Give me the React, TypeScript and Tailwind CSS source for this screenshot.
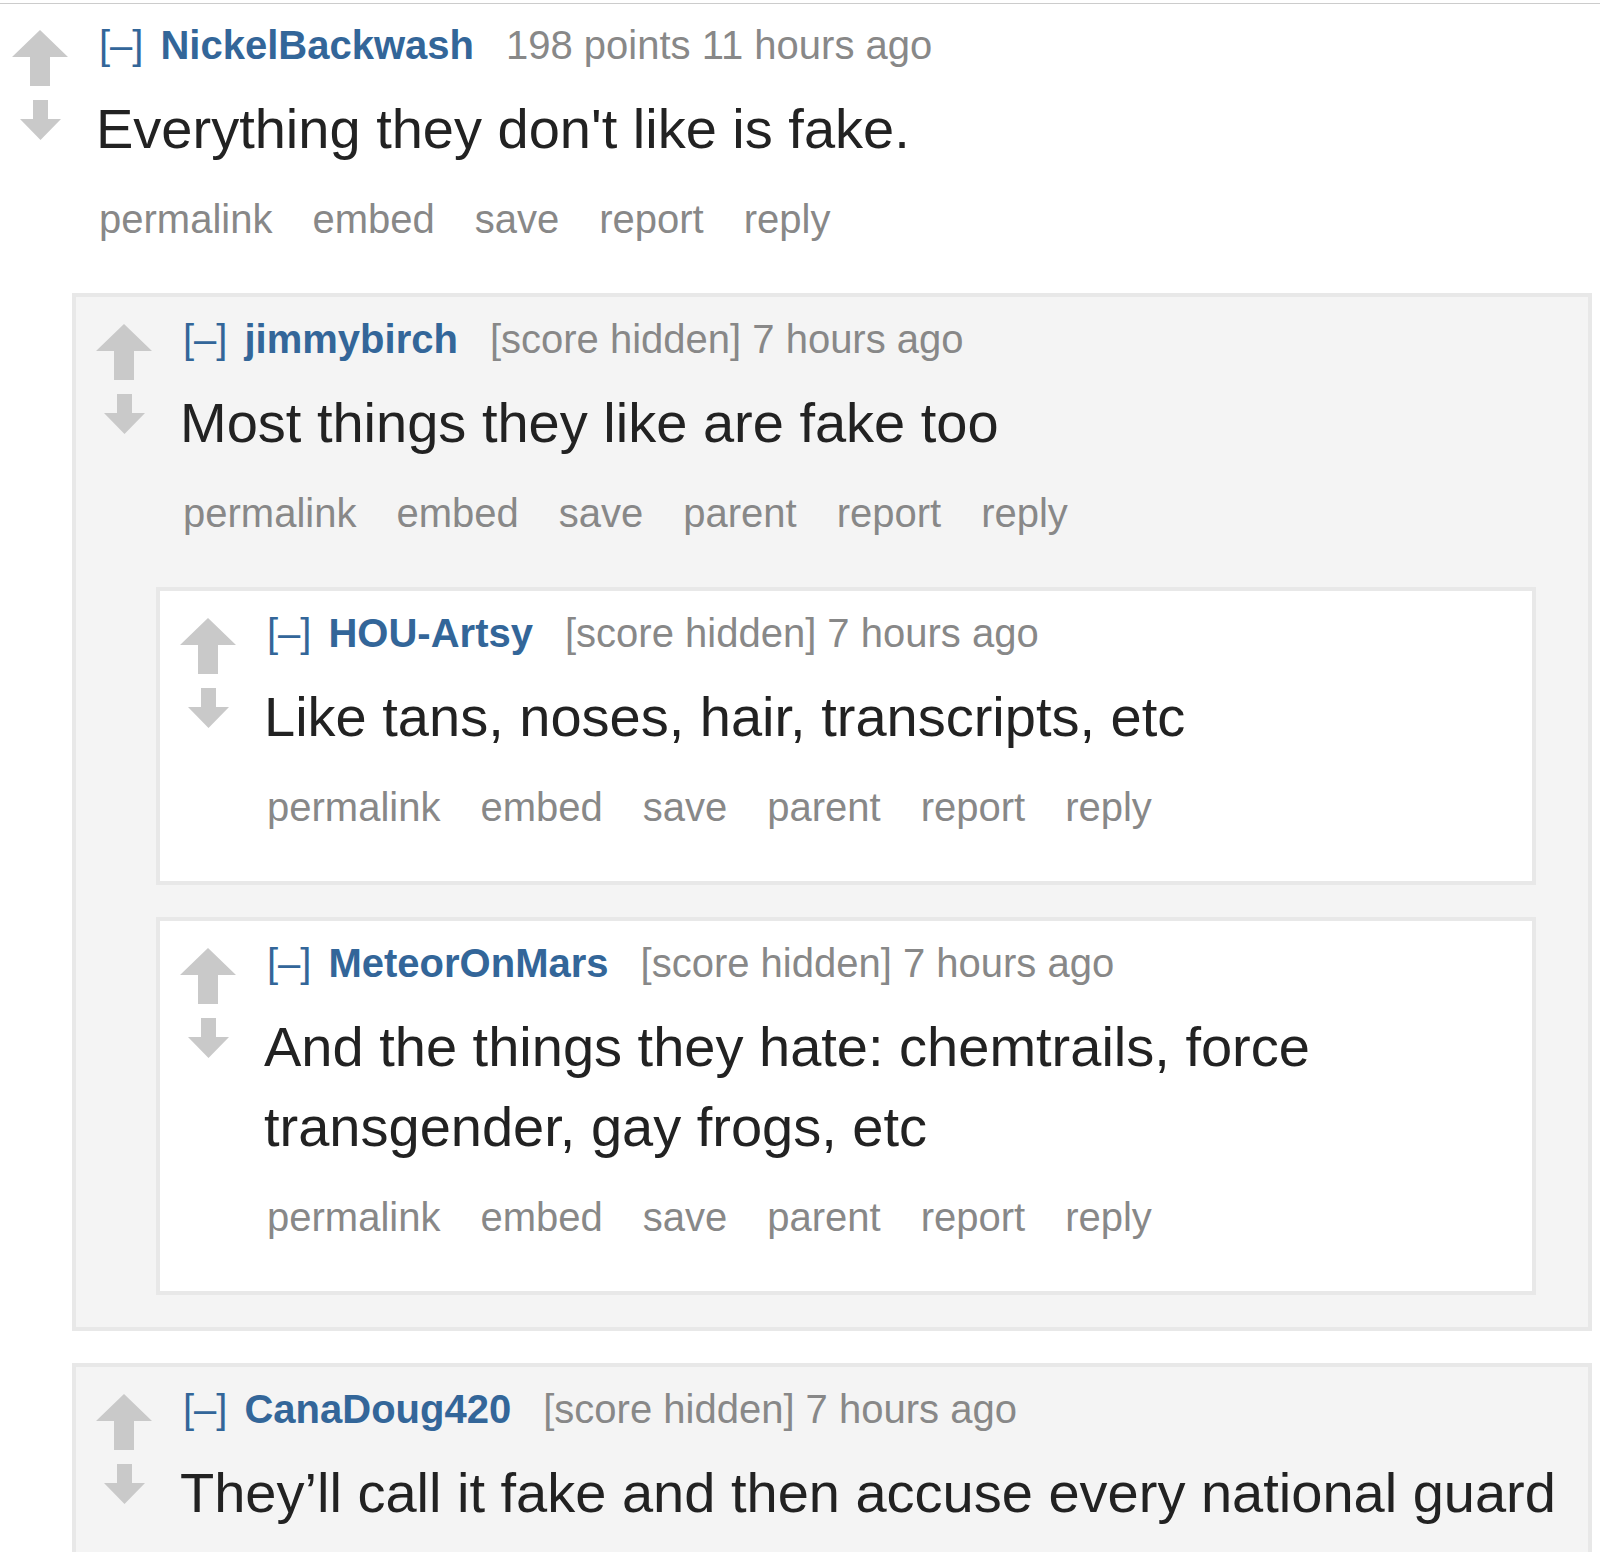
import clsx from 'clsx'

type CommentData = {
  author: string
  meta: string
  body: string
  actions: string[]
  replies?: CommentData[]
}

const thread: CommentData = {
  author: 'NickelBackwash',
  meta: '198 points 11 hours ago',
  body: "Everything they don't like is fake.",
  actions: ['permalink', 'embed', 'save', 'report', 'reply'],
  replies: [
    {
      author: 'jimmybirch',
      meta: '[score hidden] 7 hours ago',
      body: 'Most things they like are fake too',
      actions: ['permalink', 'embed', 'save', 'parent', 'report', 'reply'],
      replies: [
        {
          author: 'HOU-Artsy',
          meta: '[score hidden] 7 hours ago',
          body: 'Like tans, noses, hair, transcripts, etc',
          actions: ['permalink', 'embed', 'save', 'parent', 'report', 'reply'],
        },
        {
          author: 'MeteorOnMars',
          meta: '[score hidden] 7 hours ago',
          body: 'And the things they hate: chemtrails, force transgender, gay frogs, etc',
          actions: ['permalink', 'embed', 'save', 'parent', 'report', 'reply'],
        },
      ],
    },
    {
      author: 'CanaDoug420',
      meta: '[score hidden] 7 hours ago',
      body: 'They\u2019ll call it fake and then accuse every national guard',
      actions: ['permalink', 'embed', 'save', 'parent', 'report', 'reply'],
    },
  ],
}

function UpArrow() {
  return (
    <svg width="56" height="56" viewBox="0 0 56 56" className="block">
      <polygon points="28,0 56,27 38,27 38,56 18,56 18,27 0,27" fill="#c9c9c9" />
    </svg>
  )
}

function DownArrow() {
  return (
    <svg width="41" height="40" viewBox="0 0 41 40" className="block">
      <polygon points="13,0 28,0 28,19 41,19 20.5,40 0,19 13,19" fill="#c9c9c9" />
    </svg>
  )
}

function Comment({ c, depth }: { c: CommentData; depth: number }) {
  const wrap =
    depth === 0
      ? 'pl-[12px] pr-[8px]'
      : clsx(
          'mb-[32px] border-[4px] border-[#e8e8e8] pl-[20px]',
          depth % 2 === 1 ? 'bg-[#f4f4f4]' : 'bg-white'
        )

  return (
    <div className={wrap}>
      <div className="flex">
        {/* vote arrows */}
        <div
          className={clsx(
            'flex w-[56px] shrink-0 flex-col items-center',
            depth === 0 ? 'pt-[26px]' : 'pt-[27px]'
          )}
        >
          <UpArrow />
          <div className="mt-[14px]">
            <DownArrow />
          </div>
        </div>

        {/* entry */}
        <div
          className={clsx(
            'ml-[31px] min-w-0 flex-1 pb-[50px]',
            depth === 0 ? 'pt-[17px]' : 'pt-[18px]'
          )}
        >
          <div className="flex items-baseline text-[40px] leading-[48px] whitespace-nowrap">
            <span className="mr-[17px] text-[#336699]">[–]</span>
            <span className="mr-[32px] font-bold text-[#336699]">{c.author}</span>
            <span className="text-[#888888]">{c.meta}</span>
          </div>
          <p className="mt-[20px] ml-[-3px] text-[56px] leading-[80px] text-[#222222]">{c.body}</p>
          <ul className="mt-[26px] flex gap-[40px] text-[40px] leading-[48px] text-[#888888]">
            {c.actions.map((a) => (
              <li key={a}>{a}</li>
            ))}
          </ul>
        </div>
      </div>

      {c.replies && (
        <div className={depth === 0 ? 'ml-[60px]' : 'mr-[52px] ml-[60px]'}>
          {c.replies.map((r) => (
            <Comment key={r.author} c={r} depth={depth + 1} />
          ))}
        </div>
      )}
    </div>
  )
}

export default function App() {
  return (
    <div
      className="min-h-screen bg-white pt-[3px]"
      style={{ fontFamily: '"Liberation Sans", Arial, sans-serif' }}
    >
      <div className="border-t border-[#cccccc]">
        <Comment c={thread} depth={0} />
      </div>
    </div>
  )
}
